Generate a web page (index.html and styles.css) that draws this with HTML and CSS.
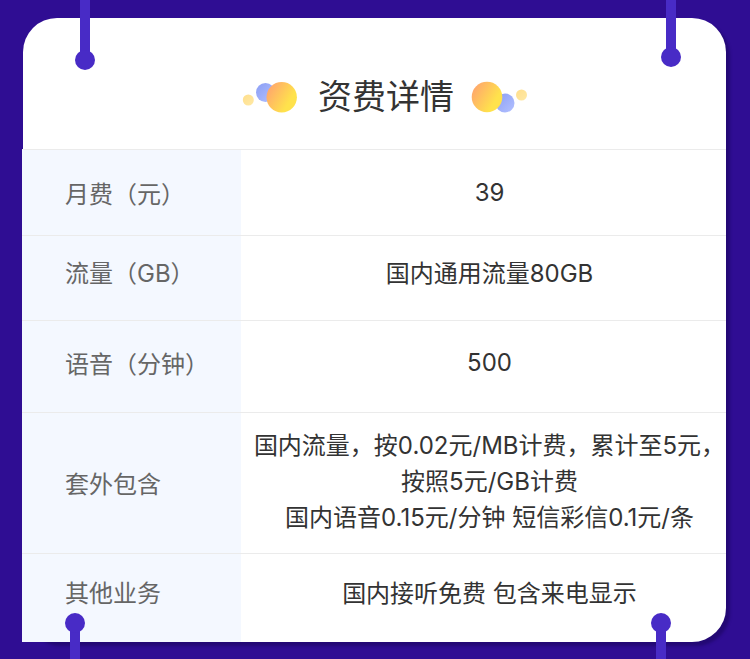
FILE: index.html
```html
<!DOCTYPE html>
<html lang="zh">
<head>
<meta charset="utf-8">
<title>资费详情</title>
<link rel="stylesheet" href="styles.css">
</head>
<body>
<div class="stage">
  <div class="card">
    <div class="head">
      <svg class="deco" width="57" height="34" viewBox="0 0 57 34">
        <defs>
          <linearGradient id="gO1" x1="0" y1="0.2" x2="1" y2="0.8">
            <stop offset="0" stop-color="#ffa46e"/>
            <stop offset="0.75" stop-color="#ffe24c"/>
          </linearGradient>
          <linearGradient id="gB1" x1="0" y1="0" x2="1" y2="1">
            <stop offset="0" stop-color="#8b9ef5"/>
            <stop offset="1" stop-color="#b3c1ff"/>
          </linearGradient>
          <linearGradient id="gY1" x1="0" y1="0" x2="1" y2="1">
            <stop offset="0" stop-color="#ffdf8c"/>
            <stop offset="1" stop-color="#ffe9a6"/>
          </linearGradient>
        </defs>
        <circle cx="6.3" cy="20" r="5.5" fill="url(#gY1)"/>
        <circle cx="23.5" cy="12.5" r="9.5" fill="url(#gB1)"/>
        <circle cx="39.7" cy="17.3" r="15.2" fill="url(#gO1)"/>
      </svg>
      <h1 class="title">资费详情</h1>
      <svg class="deco" width="58" height="34" viewBox="0 0 58 34">
        <defs>
          <linearGradient id="gO2" x1="0" y1="0.2" x2="1" y2="0.8">
            <stop offset="0" stop-color="#ffa46e"/>
            <stop offset="0.75" stop-color="#ffe24c"/>
          </linearGradient>
          <linearGradient id="gB2" x1="0" y1="0" x2="1" y2="1">
            <stop offset="0" stop-color="#8b9ef5"/>
            <stop offset="1" stop-color="#b3c1ff"/>
          </linearGradient>
          <linearGradient id="gY2" x1="0" y1="0" x2="1" y2="1">
            <stop offset="0" stop-color="#ffdf8c"/>
            <stop offset="1" stop-color="#ffe9a6"/>
          </linearGradient>
        </defs>
        <circle cx="51.5" cy="15" r="5.5" fill="url(#gY2)"/>
        <circle cx="35" cy="23" r="9.5" fill="url(#gB2)"/>
        <circle cx="17" cy="17" r="15.3" fill="url(#gO2)"/>
      </svg>
    </div>
    <div class="table">
      <div class="row r1">
        <div class="label">月费（元）</div>
        <div class="value">39</div>
      </div>
      <div class="row r2">
        <div class="label">流量（GB）</div>
        <div class="value">国内通用流量80GB</div>
      </div>
      <div class="row r3">
        <div class="label">语音（分钟）</div>
        <div class="value">500</div>
      </div>
      <div class="row r4">
        <div class="label">套外包含</div>
        <div class="value multi">国内流量，按0.02元/MB计费，累计至5元，<br>按照5元/GB计费<br>国内语音0.15元/分钟 短信彩信0.1元/条</div>
      </div>
      <div class="row r5">
        <div class="label">其他业务</div>
        <div class="value">国内接听免费 包含来电显示</div>
      </div>
    </div>
  </div>
  <span class="pin pin-tl"></span>
  <span class="pin pin-tr"></span>
  <span class="pin pin-bl"></span>
  <span class="pin pin-br"></span>
</div>
</body>
</html>
```
FILE: styles.css
```css
html, body {
  margin: 0;
  padding: 0;
}
body {
  background: #2f0d93;
  font-family: Inter, "Noto Sans CJK SC", sans-serif;
  width: 750px;
  height: 659px;
  overflow: hidden;
}
.stage {
  position: relative;
  height: 659px;
  padding-top: 18px;
  box-sizing: border-box;
}
.card {
  margin-left: 23px;
  width: 703px;
  height: 624px;
  background: #ffffff;
  border-radius: 34px;
  box-shadow: 4px 4px 3px rgba(15, 0, 60, 0.35);
  display: flex;
  flex-direction: column;
}
.head {
  height: 131px;
  box-sizing: border-box;
  padding: 62px 0 35px 21px;
  display: flex;
  justify-content: center;
  align-items: center;
}
.deco {
  display: block;
  flex: none;
}
.title {
  margin: 0 16px 4px 19px;
  font-family: "Noto Sans CJK SC", sans-serif;
  font-size: 34px;
  line-height: 34px;
  font-weight: 400;
  color: #333333;
  white-space: nowrap;
}
.table {
  margin-left: -1px;
  flex: 1;
  display: flex;
  flex-direction: column;
}
.row {
  display: grid;
  grid-template-columns: 219px 1fr;
  border-top: 1px solid #ebebeb;
  box-sizing: border-box;
}
.r1 { height: 86px; }
.r2 { height: 85px; }
.r3 { height: 92px; }
.r4 { height: 141px; }
.r5 { flex: 1; }
.label {
  background: #f4f8ff;
  padding-left: 43px;
  display: flex;
  align-items: center;
  font-size: 24px;
  color: #666666;
  white-space: nowrap;
}
.value {
  padding-left: 12px;
  display: flex;
  align-items: center;
  justify-content: center;
  text-align: center;
  font-size: 24px;
  color: #333333;
  white-space: nowrap;
}
.multi {
  line-height: 36px;
}
.r1 .label, .r1 .value { padding-bottom: 0; }
.r2 .label, .r2 .value { padding-bottom: 14px; }
.r3 .label, .r3 .value { padding-bottom: 8px; }
.r4 .label, .r4 .value { padding-bottom: 2px; }
.r5 .label, .r5 .value { padding-bottom: 13px; }
.pin {
  position: absolute;
  width: 10px;
  background: #482bc6;
}
.pin::after {
  content: "";
  position: absolute;
  left: -5px;
  width: 20px;
  height: 20px;
  border-radius: 50%;
  background: #482bc6;
}
.pin-tl { left: 80px; top: 0; height: 60px; }
.pin-tr { left: 666px; top: 0; height: 57px; }
.pin-tl::after, .pin-tr::after { bottom: -10px; }
.pin-bl { left: 70px; top: 623px; bottom: 0; }
.pin-br { left: 656px; top: 623px; bottom: 0; }
.pin-bl::after, .pin-br::after { top: -10px; }
```
